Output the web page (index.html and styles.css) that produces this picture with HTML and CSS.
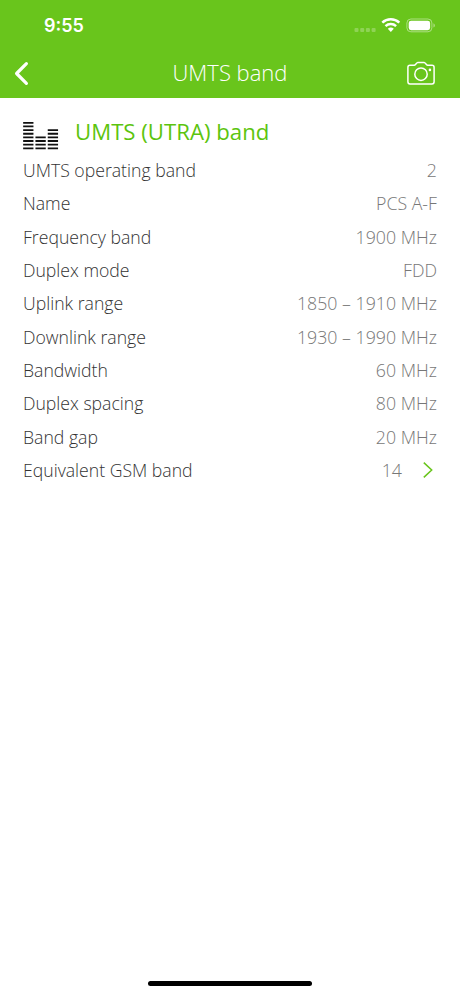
FILE: index.html
```
<!DOCTYPE html>
<html lang="en">
<head>
<meta charset="utf-8">
<title>UMTS band</title>
<link rel="stylesheet" href="styles.css">
</head>
<body>
<div class="screen">
  <header class="top">
    <div class="status">
      <span class="time">9:55</span>
      <svg class="indicators" width="86" height="20" viewBox="0 0 86 20" fill="#fff">
        <g opacity=".25"><rect x="2.5" y="13" width="4" height="4" rx="1"/><rect x="8.2" y="13" width="4" height="4" rx="1"/><rect x="13.9" y="13" width="4" height="4" rx="1"/><rect x="19.6" y="13" width="4" height="4" rx="1"/></g>
        <g fill="none" stroke="#fff" stroke-width="2.5"><path d="M30.3 7.7a12.3 12.3 0 0 1 17 0"/><path d="M33.5 11.1a7.7 7.7 0 0 1 10.6 0"/></g>
        <path d="M35.8 13.8a4.5 4.5 0 0 1 6 0l-3 3.2z"/>
        <rect x="54.9" y="4" width="25" height="12.8" rx="4" fill="none" stroke="#fff" stroke-opacity=".45"/>
        <rect x="56.7" y="5.7" width="21.4" height="9.5" rx="2.4"/>
        <path d="M81.5 8.3v4.3c1.8-.8 1.8-3.5 0-4.3z" opacity=".5"/>
      </svg>
    </div>
    <div class="nav">
      <svg class="back" width="18" height="28" viewBox="0 0 18 28" fill="none" stroke="#fff" stroke-width="3.2" stroke-linecap="round" stroke-linejoin="round"><path d="M14.4 3.6 4.6 13.5l9.8 9.9"/></svg>
      <h1 class="title">UMTS band</h1>
      <svg class="camera" width="30" height="26" viewBox="0 0 30 26" fill="none" stroke="#fff" stroke-width="1.5" stroke-linejoin="round"><path d="M4 4.3h4.2c1.2 0 2.3-2.8 3.6-2.8h6.3c1.3 0 2.4 2.8 3.6 2.8H26c1.2 0 2.1.9 2.1 2.1v14.4c0 1.2-.9 2.1-2.1 2.1H4c-1.2 0-2.1-.9-2.1-2.1V6.4c0-1.2.9-2.1 2.1-2.1z"/><circle cx="15" cy="13.2" r="6.2"/><circle cx="23.9" cy="8.9" r="1.3" fill="#fff" stroke="none"/></svg>
    </div>
  </header>
  <main class="content">
    <div class="heading">
      <svg class="bars" width="36" height="28" viewBox="0 0 36 28" fill="none" stroke="#111" stroke-width="10.3" stroke-dasharray="1.8 1.84"><path d="M5.3 27.2V-.1"/><path d="M17.6 27.2V14.4"/><path d="M29.9 27.2V7.1"/></svg>
      <h2>UMTS (UTRA) band</h2>
    </div>
    <dl class="rows">
      <div class="row"><dt>UMTS operating band</dt><dd>2</dd></div>
      <div class="row"><dt>Name</dt><dd>PCS A-F</dd></div>
      <div class="row"><dt>Frequency band</dt><dd>1900 MHz</dd></div>
      <div class="row"><dt>Duplex mode</dt><dd>FDD</dd></div>
      <div class="row"><dt>Uplink range</dt><dd>1850 – 1910 MHz</dd></div>
      <div class="row"><dt>Downlink range</dt><dd>1930 – 1990 MHz</dd></div>
      <div class="row"><dt>Bandwidth</dt><dd>60 MHz</dd></div>
      <div class="row"><dt>Duplex spacing</dt><dd>80 MHz</dd></div>
      <div class="row"><dt>Band gap</dt><dd>20 MHz</dd></div>
      <div class="row"><dt>Equivalent GSM band</dt><dd class="link">14<svg class="chevron" width="14" height="18" viewBox="0 0 14 18" fill="none" stroke="#69c51c" stroke-width="1.5"><path d="m.8 1.6 7.9 7.4-7.9 7.4"/></svg></dd></div>
    </dl>
  </main>
  <div class="home"></div>
</div>
</body>
</html>
```
FILE: styles.css
```
* { box-sizing: border-box; }
body, h1, h2, dl, dt, dd { margin: 0; font-weight: 300; }
body { background: #fff; font-family: "Open Sans", sans-serif; }
.screen { width: 460px; height: 996px; display: flex; flex-direction: column; }
.top { height: 98px; background: #69c51c; color: #fff; }
.status { height: 50px; padding: 15px 22px 0 44px; display: flex; justify-content: space-between; }
.time { font: 600 18px/22px Inter, sans-serif; }
.nav { height: 48px; padding: 0 24px 0 12px; display: grid; grid-template-columns: 54px 1fr 42px; align-items: center; }
.camera { justify-self: end; }
.title { font-size: 22px; line-height: 30px; text-align: center; padding-bottom: 4px; }
.content { flex: 1; padding: 17px 23px 0; }
.heading { height: 38.4px; display: flex; align-items: flex-start; gap: 16px; }
.bars { margin-top: 7px; }
h2 { color: #5cc40e; font-size: 22.2px; line-height: 34px; font-weight: 400; }
.row { height: 33.33px; display: flex; align-items: center; justify-content: space-between; font-size: 17.65px; line-height: 24px; color: #333; }
dd { color: #777; font-size: 17.75px; }
.link { display: flex; align-items: center; }
.chevron { margin-left: 21px; }
.home { width: 164px; height: 5px; margin: 0 auto 10px; border-radius: 3px; background: #000; }
```
